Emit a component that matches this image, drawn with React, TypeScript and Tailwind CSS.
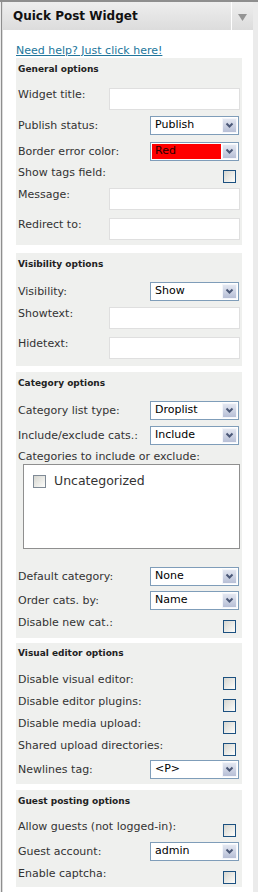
import type { ReactNode } from 'react';

function Label({ children }: { children: ReactNode }) {
  return <span className="whitespace-nowrap text-[11px] leading-[14px] text-[#333]">{children}</span>;
}

function Chevron() {
  return (
    <svg width="9" height="7" viewBox="0 0 9 7">
      <path d="M1.5 1.5 L4.5 4.5 L7.5 1.5" fill="none" stroke="#4b5877" strokeWidth="2" />
    </svg>
  );
}

function TextRow({ label, mt }: { label: string; mt: string }) {
  return (
    <div className={`flex items-start ${mt}`}>
      <Label>{label}</Label>
      <div className="ml-auto mr-[2px] h-[22px] w-[131px] border border-[#dfdfdf] bg-white" />
    </div>
  );
}

function SelectRow({ label, value, mt, red }: { label: string; value: string; mt: string; red?: boolean }) {
  return (
    <div className={`flex items-center ${mt}`}>
      <Label>{label}</Label>
      <div className="ml-auto mr-[3px] flex h-[19px] w-[89px] items-stretch border border-[#7f9db9] bg-white">
        {red ? (
          <div className="m-[1px] flex flex-1 items-center bg-[#ff0000] pl-[3px] text-[11px] text-[#2a0000]">{value}</div>
        ) : (
          <div className="flex flex-1 items-center pl-[4px] text-[11px] text-black">{value}</div>
        )}
        <div className="my-[1px] mr-[1px] flex w-[15px] items-center justify-center border border-[#f4f6fb] bg-gradient-to-b from-[#e3e7f1] to-[#b7bfd6]">
          <Chevron />
        </div>
      </div>
    </div>
  );
}

function CheckRow({ label, mt }: { label: string; mt: string }) {
  return (
    <div className={`flex items-start ${mt}`}>
      <Label>{label}</Label>
      <div className="ml-auto mr-[6px] mt-[4px] h-[13px] w-[13px] border border-[#1c5180] bg-gradient-to-br from-[#d6d6d0] to-[#fdfdfb]" />
    </div>
  );
}

function Section({ title, className, children }: { title: string; className: string; children: ReactNode }) {
  return (
    <div className={`w-[226px] bg-[#eff0ee] pl-[2px] ${className}`}>
      <div className="text-[9px] font-bold leading-[14px] text-[#222]">{title}</div>
      {children}
    </div>
  );
}

export default function App() {
  return (
    <div className="h-[892px] w-[258px] overflow-hidden border-t-2 border-[#8e8e8e] bg-[#ebebeb] font-['DejaVu_Sans',Verdana,sans-serif]">
      <div className="ml-[1px] h-full w-[252px] border-l border-[#8e8e8e] bg-[#dcdcdc] pl-[1px]">
        <div className="flex h-[28px] bg-gradient-to-b from-[#eeeeee] to-[#dcdcdc]">
          <div className="flex flex-1 items-center pl-[10px] text-[12px] font-bold text-[#111]">Quick Post Widget</div>
          <div className="w-px bg-white" />
          <div className="flex w-[21px] items-center justify-center pt-[2px]">
            <svg width="9" height="7" viewBox="0 0 9 7">
              <path d="M0 0 H9 L4.5 7 Z" fill="#949494" />
            </svg>
          </div>
        </div>

        <div className="h-full bg-white pl-[13px] pt-[14px]">
          <a className="block text-[11px] leading-[14px] text-[#21759b] underline">Need help? Just click here!</a>

          <Section title="General options" className="pt-[4px] pb-[5px]">
            <TextRow label="Widget title:" mt="mt-[12px]" />
            <SelectRow label="Publish status:" value="Publish" mt="mt-[6px]" />
            <SelectRow label="Border error color:" value="Red" mt="mt-[7px]" red />
            <CheckRow label="Show tags field:" mt="mt-[5px]" />
            <TextRow label="Message:" mt="mt-[5px]" />
            <TextRow label="Redirect to:" mt="mt-[8px]" />
          </Section>

          <Section title="Visibility options" className="mt-[8px] pt-[4px] pb-[7px]">
            <SelectRow label="Visibility:" value="Show" mt="mt-[11px]" />
            <TextRow label="Showtext:" mt="mt-[6px]" />
            <TextRow label="Hidetext:" mt="mt-[8px]" />
          </Section>

          <Section title="Category options" className="mt-[6px] pt-[4px] pb-[5px]">
            <SelectRow label="Category list type:" value="Droplist" mt="mt-[11px]" />
            <SelectRow label="Include/exclude cats.:" value="Include" mt="mt-[6px]" />
            <div className="mt-[5px] flex">
              <Label>Categories to include or exclude:</Label>
            </div>
            <div className="ml-[5px] h-[85px] w-[217px] border border-[#8f8f8f] bg-white">
              <div className="flex items-center gap-[8px] pl-[9px] pt-[9px]">
                <div className="h-[13px] w-[13px] border border-[#7f8a96] bg-gradient-to-br from-[#d6d6d0] to-[#fdfdfb]" />
                <span className="text-[12.5px] leading-[14px] text-[#333]">Uncategorized</span>
              </div>
            </div>
            <SelectRow label="Default category:" value="None" mt="mt-[18px]" />
            <SelectRow label="Order cats. by:" value="Name" mt="mt-[5px]" />
            <CheckRow label="Disable new cat.:" mt="mt-[6px]" />
          </Section>

          <Section title="Visual editor options" className="mt-[5px] pt-[3px] pb-[5px]">
            <CheckRow label="Disable visual editor:" mt="mt-[13px]" />
            <CheckRow label="Disable editor plugins:" mt="mt-[5px]" />
            <CheckRow label="Disable media upload:" mt="mt-[5px]" />
            <CheckRow label="Shared upload directories:" mt="mt-[5px]" />
            <SelectRow label="Newlines tag:" value="<P>" mt="mt-[4px]" />
          </Section>

          <Section title="Guest posting options" className="mt-[6px] pt-[4px] pb-[3px]">
            <CheckRow label="Allow guests (not logged-in):" mt="mt-[12px]" />
            <SelectRow label="Guest account:" value="admin" mt="mt-[5px]" />
            <CheckRow label="Enable captcha:" mt="mt-[6px]" />
          </Section>
        </div>
      </div>
    </div>
  );
}
